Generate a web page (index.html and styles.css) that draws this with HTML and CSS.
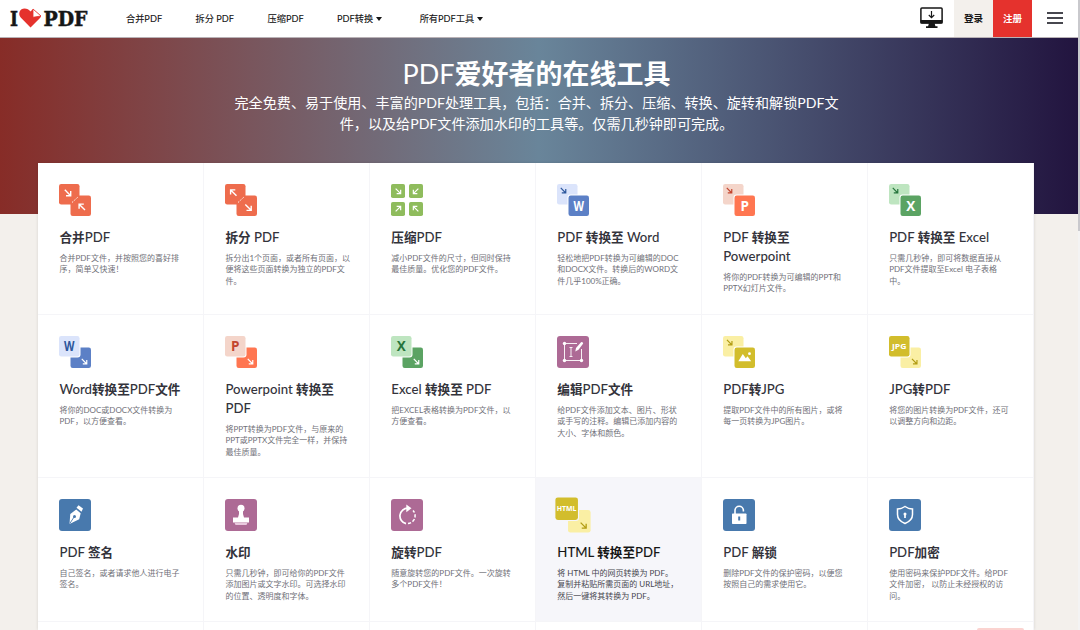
FILE: index.html
```
<!DOCTYPE html>
<html lang="zh-CN">
<head>
  <meta charset="UTF-8" />
  <meta name="viewport" content="width=device-width, initial-scale=1.0" />
  <title>iLovePDF - PDF爱好者的在线工具</title>
  <link rel="stylesheet" href="styles.css">
</head>
<body>
  <!-- Shared icon parts -->
  <svg class="defs" width="0" height="0">
    <defs>
      <path id="arrow" d="M-3 -3 L2.6 2.6 M2.9 -1.8 V2.9 H-1.8" fill="none" stroke="currentColor" stroke-width="1.4" />
      <rect id="back" width="20.5" height="20.5" rx="2.2" fill="currentColor" />
      <rect id="quarter" width="14" height="14" rx="1.8" fill="currentColor" />
    </defs>
  </svg>

  <header class="header">
    <a class="logo">
      <svg width="80" height="24" viewBox="0 0 80 24">
        <text x="1" y="19.5" textLength="8" lengthAdjust="spacingAndGlyphs">I</text>
        <path d="M21.5 21.5 L11.7 11.5 C8.5 7.5 11 2.5 15.5 2.5 C18 2.5 20 3.5 21.5 5.5 L24 3 L32 10 C32 11 31 12 30.5 12.5 Z" fill="#e5322d" />
        <path d="M24 3 L32 10 L24 11.3 Z" fill="#fff" stroke="#e5322d" stroke-width=".8" />
        <text x="34.5" y="19.5" textLength="44" lengthAdjust="spacingAndGlyphs">PDF</text>
      </svg>
    </a>
    <nav class="nav">
      <a>合并PDF</a>
      <a>拆分 PDF</a>
      <a>压缩PDF</a>
      <a>PDF转换<i class="caret"></i></a>
      <a>所有PDF工具<i class="caret"></i></a>
    </nav>
    <div class="actions">
      <svg class="desktop" width="24" height="22" viewBox="0 0 24 22">
        <rect x=".9" y=".9" width="21.2" height="15" rx="1" fill="#fff" stroke="#161616" stroke-width="1.5" />
        <path d="M.5 13H22.5V16.5H.5Z M9 16H14.5L15.5 19.5H8Z M6 19.3H17.5V21H6Z" fill="#161616" />
        <path d="M11.5 4V10.5 M8.8 8L11.5 10.7L14.2 8" fill="none" stroke="#161616" stroke-width="1.2" />
      </svg>
      <a class="login">登录</a>
      <a class="signup">注册</a>
      <div class="menu"><span></span><span></span><span></span></div>
    </div>
  </header>

  <section class="hero">
    <h1>PDF<b>爱好者的在线工具</b></h1>
    <p>完全免费、易于使用、丰富的PDF处理工具，包括：合并、拆分、压缩、转换、旋转和解锁PDF文<br>件，以及给PDF文件添加水印的工具等。仅需几秒钟即可完成。</p>
  </section>

  <main class="tools">
    <a class="tool">
      <svg class="icon" viewBox="0 0 32 32">
        <g color="#ee6c4d"><use href="#back" /><use href="#back" x="11.5" y="11.5" /></g>
        <path d="M13 18.5L19 13" stroke="#fff" stroke-width=".9" stroke-dasharray="1.4 1" />
        <g color="#fff"><use href="#arrow" x="8.8" y="8.8" /><use href="#arrow" transform="translate(23 23) rotate(180)" /></g>
      </svg>
      <h3><b>合并</b>PDF</h3>
      <p>合并PDF文件，并按照您的喜好排<br>序，简单又快速！</p>
    </a>
    <a class="tool">
      <svg class="icon" viewBox="0 0 32 32">
        <g color="#ee6c4d"><use href="#back" /><use href="#back" x="11.5" y="11.5" /></g>
        <path d="M13 18.5L19 13" stroke="#fff" stroke-width=".9" stroke-dasharray="1.4 1" />
        <g color="#fff"><use href="#arrow" transform="translate(8.5 8.8) rotate(180)" /><use href="#arrow" x="23.3" y="23.5" /></g>
      </svg>
      <h3><b>拆分</b> PDF</h3>
      <p>拆分出1个页面，或者所有页面，以<br>便将这些页面转换为独立的PDF文<br>件。</p>
    </a>
    <a class="tool">
      <svg class="icon" viewBox="0 0 32 32">
        <g color="#8fbc5d">
          <use href="#quarter" />
          <use href="#quarter" x="18" />
          <use href="#quarter" y="18" />
          <use href="#quarter" x="18" y="18" />
        </g>
        <g color="#fff">
          <use href="#arrow" transform="translate(7.2 7.2) scale(.85)" />
          <use href="#arrow" transform="translate(24.8 7.2) rotate(90) scale(.85)" />
          <use href="#arrow" transform="translate(7.2 24.8) rotate(-90) scale(.85)" />
          <use href="#arrow" transform="translate(24.8 24.8) rotate(180) scale(.85)" />
        </g>
      </svg>
      <h3><b>压缩</b>PDF</h3>
      <p>减小PDF文件的尺寸，但同时保持<br>最佳质量。优化您的PDF文件。</p>
    </a>
    <a class="tool">
      <svg class="icon" viewBox="0 0 32 32">
        <use href="#back" color="#dbe4fb" />
        <rect x="10.5" y="10.5" width="22.5" height="22.5" rx="3" fill="#fff" />
        <use href="#back" x="11.5" y="11.5" color="#5c80c6" />
        <use href="#arrow" transform="translate(6.3 6.5) scale(.85)" color="#2c569c" />
        <text x="21.7" y="26.8" fill="#fff" textLength="10.5" lengthAdjust="spacingAndGlyphs">W</text>
      </svg>
      <h3>PDF <b>转换至</b> Word</h3>
      <p>轻松地把PDF转换为可编辑的DOC<br>和DOCX文件。转换后的WORD文<br>件几乎100%正确。</p>
    </a>
    <a class="tool">
      <svg class="icon" viewBox="0 0 32 32">
        <use href="#back" color="#f4d5ca" />
        <rect x="10.5" y="10.5" width="22.5" height="22.5" rx="3" fill="#fff" />
        <use href="#back" x="11.5" y="11.5" color="#ff7651" />
        <use href="#arrow" transform="translate(6.3 6.5) scale(.85)" color="#c3452e" />
        <text x="21.7" y="26.8" fill="#fff">P</text>
      </svg>
      <h3>PDF <b>转换至</b><br>Powerpoint</h3>
      <p>将你的PDF转换为可编辑的PPT和<br>PPTX幻灯片文件。</p>
    </a>
    <a class="tool">
      <svg class="icon" viewBox="0 0 32 32">
        <use href="#back" color="#bee5c0" />
        <rect x="10.5" y="10.5" width="22.5" height="22.5" rx="3" fill="#fff" />
        <use href="#back" x="11.5" y="11.5" color="#5ba363" />
        <use href="#arrow" transform="translate(6.3 6.5) scale(.85)" color="#26753c" />
        <text x="21.7" y="26.8" fill="#fff">X</text>
      </svg>
      <h3>PDF <b>转换至</b> Excel</h3>
      <p>只需几秒钟，即可将数据直接从<br>PDF文件提取至Excel 电子表格<br>中。</p>
    </a>

    <a class="tool">
      <svg class="icon" viewBox="0 0 32 32">
        <use href="#back" x="11.5" y="11.5" color="#5c80c6" />
        <rect x="-1" y="-1" width="22.5" height="22.5" rx="3" fill="#fff" />
        <use href="#back" color="#dbe4fb" />
        <use href="#arrow" transform="translate(25.3 25.5) scale(.85)" color="#fff" />
        <text x="10.2" y="15.2" fill="#2c569c" textLength="10.5" lengthAdjust="spacingAndGlyphs">W</text>
      </svg>
      <h3>Word<b>转换至</b>PDF<b>文件</b></h3>
      <p>将你的DOC或DOCX文件转换为<br>PDF，以方便查看。</p>
    </a>
    <a class="tool">
      <svg class="icon" viewBox="0 0 32 32">
        <use href="#back" x="11.5" y="11.5" color="#ff7651" />
        <rect x="-1" y="-1" width="22.5" height="22.5" rx="3" fill="#fff" />
        <use href="#back" color="#f4d5ca" />
        <use href="#arrow" transform="translate(25.3 25.5) scale(.85)" color="#fff" />
        <text x="10.2" y="15.2" fill="#c3452e">P</text>
      </svg>
      <h3>Powerpoint <b>转换至</b><br>PDF</h3>
      <p>将PPT转换为PDF文件，与原来的<br>PPT或PPTX文件完全一样，并保持<br>最佳质量。</p>
    </a>
    <a class="tool">
      <svg class="icon" viewBox="0 0 32 32">
        <use href="#back" x="11.5" y="11.5" color="#5ba363" />
        <rect x="-1" y="-1" width="22.5" height="22.5" rx="3" fill="#fff" />
        <use href="#back" color="#bee5c0" />
        <use href="#arrow" transform="translate(25.3 25.5) scale(.85)" color="#fff" />
        <text x="10.2" y="15.2" fill="#26753c">X</text>
      </svg>
      <h3>Excel <b>转换至</b> PDF</h3>
      <p>把EXCEL表格转换为PDF文件，以<br>方便查看。</p>
    </a>
    <a class="tool">
      <svg class="icon" viewBox="0 0 32 32">
        <rect width="32" height="32" rx="3" fill="#ad6a95" />
        <path d="M20 7.5H7.5V24.5H24.5V13 M14 12V20 M12.5 11.5H15.5 M12.5 20.5H15.5" fill="none" stroke="#fff" stroke-width=".9" />
        <g fill="#fff"><circle cx="7.5" cy="7.5" r="1.7" /><circle cx="7.5" cy="24.5" r="1.7" /><circle cx="24.5" cy="24.5" r="1.7" /></g>
        <path d="M18.3 15.5L19 12L24 6.2Q25.5 5.5 26.2 7.5L21.5 13.7Z" fill="#fff" />
      </svg>
      <h3><b>编辑</b>PDF<b>文件</b></h3>
      <p>给PDF文件添加文本、图片、形状<br>或手写的注释。编辑已添加内容的<br>大小、字体和颜色。</p>
    </a>
    <a class="tool">
      <svg class="icon" viewBox="0 0 32 32">
        <use href="#back" color="#faefa4" />
        <rect x="10.5" y="10.5" width="22.5" height="22.5" rx="3" fill="#fff" />
        <use href="#back" x="11.5" y="11.5" color="#d2bd2c" />
        <use href="#arrow" transform="translate(6.5 6.5) scale(.85)" color="#b29c13" />
        <path d="M15.3 25.3L19.8 18L22.8 22.3L24.5 20.2L28.2 25.3Z" fill="#fff" />
        <circle cx="26.5" cy="17.7" r="1.4" fill="#fff" />
      </svg>
      <h3>PDF<b>转</b>JPG</h3>
      <p>提取PDF文件中的所有图片，或将<br>每一页转换为JPG图片。</p>
    </a>
    <a class="tool">
      <svg class="icon" viewBox="0 0 32 32">
        <use href="#back" x="11.5" y="11.5" color="#faefa4" />
        <rect x="-1" y="-1" width="22.5" height="22.5" rx="3" fill="#fff" />
        <use href="#back" color="#d2bd2c" />
        <use href="#arrow" transform="translate(25.5 25.5) scale(.85)" color="#b29c13" />
        <text class="small" x="10.2" y="12.9" fill="#fff" textLength="14.5" lengthAdjust="spacingAndGlyphs">JPG</text>
      </svg>
      <h3>JPG<b>转</b>PDF</h3>
      <p>将您的图片转换为PDF文件，还可<br>以调整方向和边距。</p>
    </a>

    <a class="tool">
      <svg class="icon" viewBox="0 0 32 32">
        <rect width="32" height="32" rx="3" fill="#4879ad" />
        <path d="M10.5 25L11.3 15L17.2 10.5L21.7 14.3L20.2 20.3Z" fill="#fff" />
        <path d="M17.5 8.7L19.5 6.2L24 9.5L22.5 12.8Z" fill="#fff" />
        <path d="M10.8 24.5L15.2 17.8" stroke="#4879ad" stroke-width=".9" />
        <circle cx="15.5" cy="17.5" r="1.5" fill="#4879ad" />
      </svg>
      <h3>PDF <b>签名</b></h3>
      <p>自己签名，或者请求他人进行电子<br>签名。</p>
    </a>
    <a class="tool">
      <svg class="icon" viewBox="0 0 32 32">
        <rect width="32" height="32" rx="3" fill="#ad6a95" />
        <circle cx="16" cy="9.3" r="3.5" fill="#fff" />
        <path d="M14 10H18V15L19 18.5H24V23.5H8V18.5H13L14 15Z" fill="#fff" />
        <path d="M9.5 23.8H22.5L21.5 26H10.5Z" fill="#e9c9de" />
      </svg>
      <h3><b>水印</b></h3>
      <p>只需几秒钟，即可给你的PDF文件<br>添加图片或文字水印。可选择水印<br>的位置、透明度和字体。</p>
    </a>
    <a class="tool">
      <svg class="icon" viewBox="0 0 32 32">
        <rect width="32" height="32" rx="3" fill="#ad6a95" />
        <path d="M17 9.2A7.8 7.8 0 0 0 15 24.6" fill="none" stroke="#fff" stroke-width="1.7" />
        <path d="M17 24.6A7.8 7.8 0 0 0 22 11.5" fill="none" stroke="#fff" stroke-width="1.5" stroke-dasharray="3.2 1.7" />
        <path d="M15.3 5.5L20.5 9.3L15.3 13.2Z" fill="#fff" />
      </svg>
      <h3><b>旋转</b>PDF</h3>
      <p>随意旋转您的PDF文件。一次旋转<br>多个PDF文件！</p>
    </a>
    <a class="tool active">
      <svg class="icon" viewBox="0 0 32 32">
        <use href="#back" x="11.5" y="11.5" color="#faefa4" />
        <rect x="-1" y="-1" width="22.5" height="22.5" rx="3" fill="#f6f6fa" />
        <use href="#back" color="#d2bd2c" />
        <use href="#arrow" transform="translate(25.5 25.5) scale(.85)" color="#b29c13" />
        <text class="small" x="10.2" y="12.7" fill="#fff" textLength="18" lengthAdjust="spacingAndGlyphs">HTML</text>
      </svg>
      <h3>HTML <b>转换至</b>PDF</h3>
      <p>将 HTML 中的网页转换为 PDF。<br>复制并粘贴所需页面的 URL地址，<br>然后一键将其转换为 PDF。</p>
    </a>
    <a class="tool">
      <svg class="icon" viewBox="0 0 32 32">
        <rect width="32" height="32" rx="3" fill="#4879ad" />
        <path d="M12 15V11.5A4.2 4.2 0 0 1 20.4 11.5V12.5" fill="none" stroke="#fff" stroke-width="1.6" />
        <rect x="9" y="14.5" width="14.5" height="10.5" rx=".7" fill="#fff" />
        <path d="M16.2 17.5V21.5" stroke="#4879ad" stroke-width="2" />
      </svg>
      <h3>PDF <b>解锁</b></h3>
      <p>删除PDF文件的保护密码，以便您<br>按照自己的需求使用它。</p>
    </a>
    <a class="tool">
      <svg class="icon" viewBox="0 0 32 32">
        <rect width="32" height="32" rx="3" fill="#4879ad" />
        <path d="M16 7.5Q19.5 10 23.5 10V15.5Q23.5 21.5 16 24.5Q8.5 21.5 8.5 15.5V10Q12.5 10 16 7.5Z" fill="none" stroke="#fff" stroke-width="1.5" />
        <circle cx="16" cy="15" r="1.5" fill="#fff" />
        <path d="M16 15V19" stroke="#fff" stroke-width="1.7" />
      </svg>
      <h3>PDF<b>加密</b></h3>
      <p>使用密码来保护PDF文件。给PDF<br>文件加密， 以防止未经授权的访<br>问。</p>
    </a>

    <a class="tool next"></a>
    <a class="tool next"></a>
    <a class="tool next"></a>
    <a class="tool next"></a>
    <a class="tool next"></a>
    <a class="tool next"><span class="badge"></span></a>
  </main>

  <div class="scrollbar"></div>
</body>
</html>
```

FILE: styles.css
```
* {
  box-sizing: border-box;
}

body {
  margin: 0;
  height: 630px;
  overflow: hidden;
  background: #f3f0ec;
  color: #33333b;
  font-family: Lato, "Noto Sans CJK SC", sans-serif;
}

.defs {
  position: absolute;
}

.header {
  display: flex;
  height: 38px;
  width: 1078px;
  background: #fff;
  border-bottom: 1px solid #b9b2b6;
}

.logo {
  width: 126px;
  padding: 6px 0 0 9px;
}

.logo text {
  font: bold 20px "DejaVu Serif", serif;
  fill: #161616;
  stroke: #161616;
  stroke-width: .5px;
}

.nav {
  display: flex;
  gap: 33.5px;
  font-size: 9.2px;
  line-height: 37px;
  white-space: nowrap;
  color: #161616;
  -webkit-text-stroke: .1px #161616;
}

.nav a:nth-child(4) {
  margin-right: 4px;
}

.caret {
  display: inline-block;
  margin-left: 3px;
  vertical-align: 1.5px;
  border: 3px solid transparent;
  border-top: 4px solid #161616;
  border-bottom: 0;
}

.actions {
  display: flex;
  margin-left: auto;
  font-size: 9.5px;
  font-weight: 700;
  line-height: 37px;
  text-align: center;
}

.desktop {
  margin: 7px 10px 0 0;
}

.login {
  width: 39px;
  background: #f3f0ec;
  color: #161616;
}

.signup {
  width: 39px;
  background: #e5322d;
  color: #fff;
}

.menu {
  width: 46px;
  padding: 12px 15px 0;
}

.menu span {
  display: block;
  height: 1.5px;
  margin-bottom: 3.5px;
  background: #47474f;
}

.hero {
  width: 1078px;
  height: 176px;
  padding: 18px 5px 0 0;
  background: linear-gradient(90deg, #872c27 0, #69859a 50%, #22143f 100%);
  color: #fff;
  text-align: center;
  white-space: nowrap;
}

.hero h1 {
  margin: 0 0 1px;
  font-size: 27px;
  font-weight: 400;
  line-height: 36px;
}

.hero p {
  margin: 0;
  font-size: 14.1px;
  line-height: 20.5px;
}

.tools {
  display: grid;
  grid-template-columns: repeat(6, 1fr);
  grid-template-rows: 152px 163px 144px 8px;
  width: 995.6px;
  margin: -51px 0 0 38.4px;
  background: #fff;
  box-shadow: 0 0 3px rgba(0, 0, 0, .12);
}

.tool {
  position: relative;
  padding: 21px 0 0 21.1px;
  border-right: 1px solid #f5f5f8;
  border-bottom: 1px solid #f5f5f8;
  white-space: nowrap;
}

.icon {
  display: block;
  width: 32px;
  height: 32px;
  overflow: visible;
}

.icon text {
  font: bold 13.5px "Open Sans", sans-serif;
  text-anchor: middle;
}

.icon .small {
  font-size: 6.8px;
}

.tool h3 {
  margin: 12.4px 0 5.4px;
  font-size: 13.2px;
  font-weight: 500;
  line-height: 19px;
}

.tool h3 b {
  font-size: 12.6px;
}

.tool p {
  margin: 0;
  font-size: 8px;
  line-height: 11.7px;
  color: #707078;
}

.active {
  background: #f6f6fa;
}

.active .icon {
  transform: scale(1.1);
}

.active h3 {
  color: #161616;
}

.active p {
  color: #47474f;
}

.next {
  padding: 0;
  border-bottom: 0;
}

.badge {
  position: absolute;
  right: 9px;
  bottom: 0;
  width: 47px;
  height: 2px;
  border-radius: 2px 2px 0 0;
  background: #fbd3d0;
}

.scrollbar {
  position: absolute;
  top: 0;
  right: 0;
  width: 2px;
  height: 630px;
  background: linear-gradient(#c9c9cd 0 231px, #f3f3f3 231px);
}
```
